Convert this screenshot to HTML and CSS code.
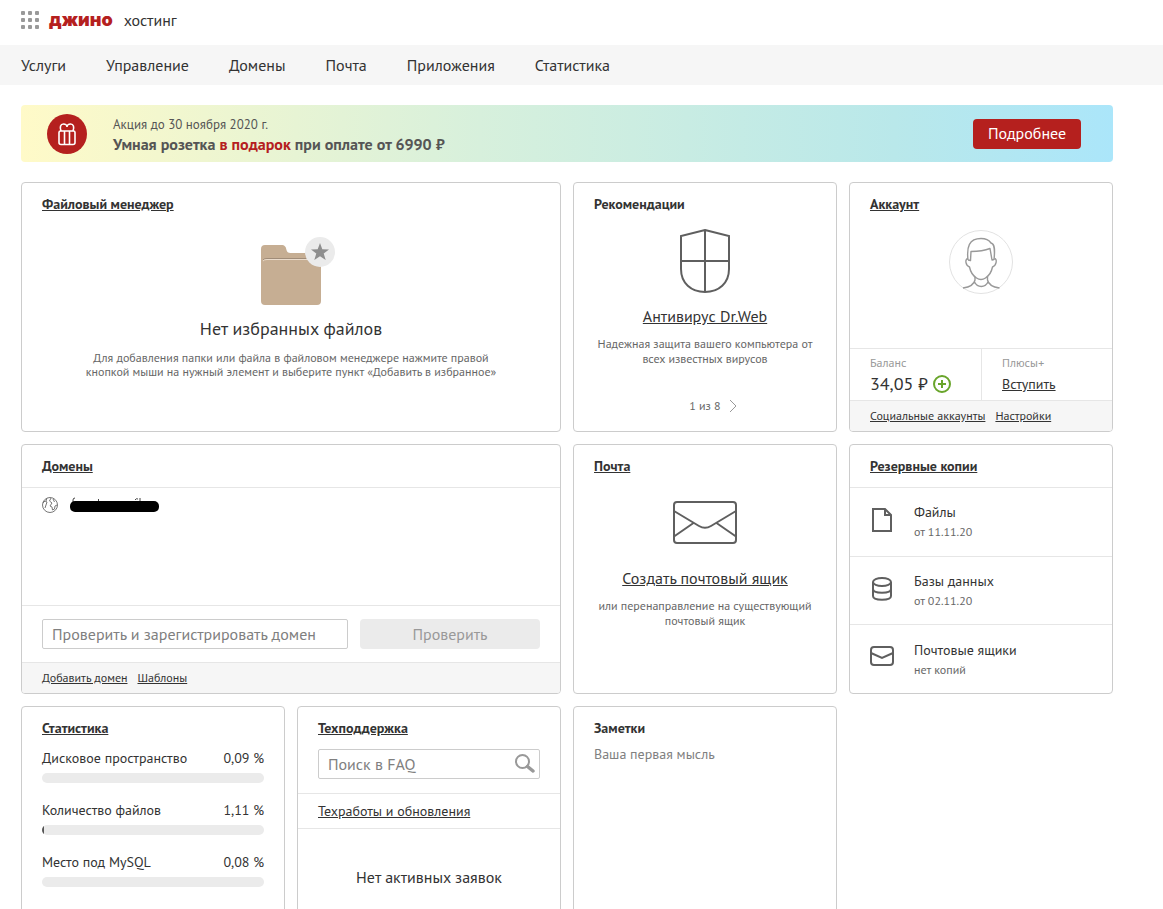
FILE: index.html
```html
<!DOCTYPE html>
<html lang="ru">
<head>
<meta charset="utf-8">
<title>Джино — хостинг</title>
<link rel="stylesheet" href="styles.css">
</head>
<body>
<header class="top">
  <svg class="apps" width="18" height="18" viewBox="0 0 18 18" fill="#999">
    <rect width="4" height="4" rx="1"/><rect x="7" width="4" height="4" rx="1"/><rect x="14" width="4" height="4" rx="1"/>
    <rect y="7" width="4" height="4" rx="1"/><rect x="7" y="7" width="4" height="4" rx="1"/><rect x="14" y="7" width="4" height="4" rx="1"/>
    <rect y="14" width="4" height="4" rx="1"/><rect x="7" y="14" width="4" height="4" rx="1"/><rect x="14" y="14" width="4" height="4" rx="1"/>
  </svg>
  <span class="logo">джино</span>
  <span class="service">хостинг</span>
</header>
<nav class="nav">
  <a href="#">Услуги</a><a href="#">Управление</a><a href="#">Домены</a><a href="#">Почта</a><a href="#">Приложения</a><a href="#">Статистика</a>
</nav>
<main class="main">
  <section class="promo">
    <svg width="40" height="40" viewBox="0 0 40 40" fill="none" stroke="#fff" stroke-width="1.6">
      <circle cx="20" cy="20" r="20" fill="#b5201e" stroke="none"/>
      <path d="M13.500 17h13q1.500 0 1.500 1.500v10q0 2-2 2H14q-2 0-2-2v-10q0-1.500 1.500-1.500zM17.500 17v13M22.500 17v13M14 17c-1.500-4-.5-7 2.500-7 2 0 3.500 1.500 3.500 3 0-1.500 1.500-3 3.500-3 3 0 4 3 2.500 7"/>
    </svg>
    <div class="promo-text">
      <div class="promo-date">Акция до 30 ноября 2020 г.</div>
      <div class="promo-title">Умная розетка <span class="red">в подарок</span> при оплате от 6990 ₽</div>
    </div>
    <button class="more" type="button">Подробнее</button>
  </section>

  <div class="grid">
    <section class="card wide">
      <h2 class="title"><a href="#">Файловый менеджер</a></h2>
      <div class="center folder-area">
        <svg class="folder" width="74" height="68" viewBox="0 0 74 68">
          <path d="M0 12q0-4 4-4h16c4 0 5 2 5.500 5q.5 3 4 3H56q4 0 4 4v44q0 4-4 4H4q-4 0-4-4z" fill="#c6ae93"/>
          <path d="M2 23q1-1.500 4-1.500h42" fill="none" stroke="#a08c78"/>
          <path d="M2 24q1-1.500 4-1.500h42" fill="none" stroke="#eadbcb"/>
          <circle cx="59" cy="15" r="15" fill="#ebebeb"/>
          <path d="M59 6l2.300 6.200 6.700.2-5.300 4.100 2 6.500-5.700-3.800-5.700 3.800 2-6.500-5.300-4.100 6.700-.2z" fill="#8e8e8e"/>
        </svg>
        <div class="big">Нет избранных файлов</div>
        <p class="note tight">Для добавления папки или файла в файловом менеджере нажмите правой<br>кнопкой мыши на нужный элемент и выберите пункт «Добавить в избранное»</p>
      </div>
    </section>

    <section class="card">
      <h2 class="title">Рекомендации</h2>
      <div class="center shield-area">
        <svg width="52" height="65" viewBox="0 0 52 65" fill="none" stroke="#5f5f5f" stroke-width="2">
          <path d="M26 1L50 7v33c0 14-10 23-24 23S2 54 2 40V7zM26 1v62M2 32h48"/>
        </svg>
        <a class="lead" href="#">Антивирус Dr.Web</a>
        <p class="note">Надежная защита вашего компьютера от<br>всех известных вирусов</p>
      </div>
      <div class="pager">1 из 8
        <svg width="8" height="14" viewBox="0 0 8 14" fill="none" stroke="#999"><path d="M1 1l6 6-6 6"/></svg>
      </div>
    </section>

    <section class="card">
      <h2 class="title"><a href="#">Аккаунт</a></h2>
      <div class="center avatar-area">
        <svg width="64" height="64" viewBox="0 0 64 64" fill="none" stroke="#999" stroke-width="1.4" stroke-linejoin="round">
          <circle cx="32" cy="32" r="31.500" stroke="#e2e2e2" stroke-width="1"/>
          <path d="M19 30C17.500 17 20 8.500 32 8.500c5 0 8 1.500 10 4.500 4 1 4 7 3 17"/>
          <path d="M19 30l2.500.5.500-9c8 0 14-1 19-3L43 30l2-.5"/>
          <path d="M19 28.500c-3.500.5-2.500 7 1.500 8.500 1 5 4 9 7 11 3 2 6 2 9 0s6-6 7-11c4-1.500 5-8 2-8.500"/>
          <path d="M26 47v3c-1 5-5 7-12 8M38.500 47v3c1 5 5 7 12 8M25.500 52c3 6 10.500 6 13.500 0"/>
        </svg>
      </div>
      <div class="balance">
        <div class="cell">
          <div class="label">Баланс</div>
          <div class="amount">34,05 ₽
            <button class="plus" type="button" aria-label="Пополнить"><svg width="18" height="18" viewBox="0 0 18 18" fill="none" stroke="#69a52b" stroke-width="2"><circle cx="9" cy="9" r="8"/><path d="M9 5v8M5 9h8"/></svg></button>
          </div>
        </div>
        <div class="cell">
          <div class="label">Плюсы<em>+</em></div>
          <a class="join" href="#">Вступить</a>
        </div>
      </div>
      <footer class="foot"><a href="#">Социальные аккаунты</a><a href="#">Настройки</a></footer>
    </section>

    <section class="card wide">
      <h2 class="title ruled"><a href="#">Домены</a></h2>
      <div class="domain">
        <svg width="16" height="16" viewBox="0 0 16 16" fill="none" stroke="#777"><circle cx="8" cy="8" r="7.500"/><path d="M1 6l2-2 2 1-1 3-1 3M5 1l-1 3M9 1L7.500 4 10 6 8 9l2 1 .5 3 2-1 .5-3 2-1M11 2l1.500 3"/></svg>
        <svg width="90" height="16" viewBox="0 0 90 16"><path d="M3 5V3q0-2 2-2M28.500 2v4M65 3q1-2 3-1M70 1v4" stroke="#444" fill="none"/><rect y="4" width="89" height="11" rx="5"/></svg>
      </div>
      <form class="check">
        <input class="field" type="text" aria-label="Домен" placeholder="Проверить и зарегистрировать домен">
        <button class="check-btn" type="button" disabled>Проверить</button>
      </form>
      <footer class="foot"><a href="#">Добавить домен</a><a href="#">Шаблоны</a></footer>
    </section>

    <section class="card">
      <h2 class="title"><a href="#">Почта</a></h2>
      <div class="center mail-area">
        <svg width="64" height="43" viewBox="0 0 64 43" fill="none" stroke="#5f5f5f" stroke-width="2">
          <rect x="1" y="1" width="62" height="41" rx="3"/>
          <path d="M1 10l25 15q6 3.500 12 0L63 10M1 35.500L20.500 22M63 35.500L43.500 22"/>
        </svg>
        <a class="lead" href="#">Создать почтовый ящик</a>
        <p class="note">или перенаправление на существующий<br>почтовый ящик</p>
      </div>
    </section>

    <section class="card">
      <h2 class="title ruled"><a href="#">Резервные копии</a></h2>
      <div class="copy">
        <svg width="24" height="24" viewBox="0 0 24 24" fill="none" stroke="#5f5f5f" stroke-width="2"><path d="M3 1h12l6 6v16H3zM15 1v6h6"/></svg>
        <div><div class="copy-name">Файлы</div><div class="copy-date">от 11.11.20</div></div>
      </div>
      <div class="copy">
        <svg width="24" height="24" viewBox="0 0 24 24" fill="none" stroke="#5f5f5f" stroke-width="2"><ellipse cx="12" cy="5" rx="9" ry="4"/><path d="M3 5v14c0 5 18 5 18 0V5M3 12c0 5 18 5 18 0"/></svg>
        <div><div class="copy-name">Базы данных</div><div class="copy-date">от 02.11.20</div></div>
      </div>
      <div class="copy">
        <svg width="24" height="24" viewBox="0 0 24 24" fill="none" stroke="#5f5f5f" stroke-width="2"><rect x="1" y="2" width="22" height="18" rx="3"/><path d="M1 8l11 5 11-5"/></svg>
        <div><div class="copy-name">Почтовые ящики</div><div class="copy-date">нет копий</div></div>
      </div>
    </section>

    <section class="card">
      <h2 class="title"><a href="#">Статистика</a></h2>
      <div class="stats">
        <div class="stat"><span>Дисковое пространство</span><span>0,09 %</span><div class="bar"></div></div>
        <div class="stat"><span>Количество файлов</span><span>1,11 %</span><div class="bar"><div class="fill" style="width:1.11%"></div></div></div>
        <div class="stat"><span>Место под MySQL</span><span>0,08 %</span><div class="bar"></div></div>
      </div>
    </section>

    <section class="card">
      <h2 class="title"><a href="#">Техподдержка</a></h2>
      <form class="search">
        <input class="field" type="text" aria-label="Поиск в FAQ" placeholder="Поиск в FAQ">
        <button class="search-btn" type="button" aria-label="Найти"><svg width="20" height="20" viewBox="0 0 20 20" fill="none" stroke="#999"><circle cx="7.500" cy="7.500" r="6.500" stroke-width="2"/><path d="M12.500 12.500l5.500 4.500" stroke-width="3.500" stroke-linecap="round"/></svg></button>
      </form>
      <div class="works"><a href="#">Техработы и обновления</a></div>
      <div class="empty">Нет активных заявок</div>
    </section>

    <section class="card">
      <h2 class="title notes-title">Заметки</h2>
      <textarea class="memo" aria-label="Заметки" placeholder="Ваша первая мысль"></textarea>
    </section>
  </div>
</main>
</body>
</html>
```
FILE: styles.css
```css
* { box-sizing: border-box; }
html, body { height: 100%; }
body {
  margin: 0;
  overflow-y: auto;
  scrollbar-width: none;
  background: #fff;
  color: #333;
  font: 14px/18px "PT Sans", "Noto Sans", sans-serif;
}
svg { display: block; flex: none; }
a { color: inherit; text-underline-offset: 1px; }
h2, p { margin: 0; }
button, input, textarea { font: inherit; }
button { border: 0; padding: 0; background: none; }

.top { display: flex; align-items: center; height: 45px; padding: 0 21px 6px; }
.logo { margin-left: 10px; color: #b5201e; font: 900 18px/24px Inter, sans-serif; }
.service { margin-left: 11px; font-size: 16px; }
.nav { display: flex; gap: 40px; height: 40px; padding: 0 21px; align-items: center; background: #f6f6f6; font-size: 16px; }
.nav a { text-decoration: none; }
.main { padding: 20px 50px 20px 21px; }

.promo {
  display: flex; align-items: center; height: 57px; margin-bottom: 20px; padding: 0 32px 0 26px;
  border-radius: 4px; background: linear-gradient(90deg, #fffac8, #d7f0dc 42%, #b9e8ea 80%, #abe6fa);
}
.promo-text { flex: 1; margin-left: 26px; color: #555; font-size: 13px; }
.promo-title { font-size: 16px; font-weight: 700; line-height: 18px; }
.promo-date { line-height: 20px; }
.red { color: #b5201e; }
.more { width: 108px; height: 30px; padding-bottom: 2px; border-radius: 4px; background: #b5201e; color: #fff; font-size: 16px; }

.grid { display: grid; grid-template-columns: repeat(4, 1fr); grid-auto-rows: minmax(250px, auto); gap: 12px; }
.card { display: flex; flex-direction: column; min-width: 0; overflow: hidden; border: 1px solid #ccc; border-radius: 4px; }
.wide { grid-column: span 2; }
.title { padding: 11px 20px; font-size: 14px; line-height: 20px; }
.ruled { border-bottom: 1px solid #e6e6e6; }
.center { display: flex; flex-direction: column; align-items: center; text-align: center; }
.note { color: #666; font-size: 12px; line-height: 15px; white-space: nowrap; }
.tight { line-height: 14px; }
.big { margin: 12px 0 10px; font-size: 18px; line-height: 24px; }
.lead { margin: 11px 0 9px; font-size: 16px; line-height: 22px; }

.folder-area { padding-top: 12px; }
.folder { margin-left: 14px; }
.shield-area { padding-top: 4px; }
.avatar-area { flex: 1; padding-top: 5px; }
.mail-area { padding-top: 14px; }
.mail-area .lead { margin-top: 23px; }
.pager { display: flex; justify-content: center; align-items: center; gap: 8px; margin-top: auto; padding: 0 0 16px 16px; color: #666; font-size: 12px; }

.balance { display: grid; grid-template-columns: 1fr 1fr; border-top: 1px solid #e6e6e6; }
.cell { height: 51px; padding: 5px 0 0 20px; }
.cell + .cell { border-left: 1px solid #e6e6e6; }
.label { color: #999; font-size: 12px; }
.amount { display: flex; align-items: center; gap: 5px; font-size: 18px; line-height: 24px; white-space: nowrap; }
.join { font-size: 14px; line-height: 24px; }
.foot { display: flex; gap: 10px; height: 31px; align-items: center; padding: 0 20px; border-top: 1px solid #e6e6e6; background: #f6f6f6; font-size: 12px; white-space: nowrap; }

.domain { display: flex; flex: 1; gap: 12px; padding: 9px 20px; }
.check { display: flex; gap: 12px; padding: 13px 20px; border-top: 1px solid #e6e6e6; }
.field { flex: 1; min-width: 0; height: 30px; padding: 0 9px; border: 1px solid #ccc; border-radius: 2px; font-size: 16px; }
.field::placeholder, .memo::placeholder { color: #808080; opacity: 1; }
.check-btn { width: 180px; height: 30px; border-radius: 4px; background: #ebebeb; color: #999; font-size: 16px; }

.copy { display: flex; flex: 1; align-items: center; gap: 20px; padding: 0 20px 4px; }
.copy + .copy { border-top: 1px solid #e6e6e6; }
.copy-name { padding-top: 5px; line-height: 20px; }
.copy-date { color: #666; font-size: 12px; line-height: 20px; }

.stats { display: flex; flex-direction: column; gap: 14px; padding: 0 20px; }
.stat { display: flex; flex-wrap: wrap; justify-content: space-between; row-gap: 6px; }
.bar { width: 100%; height: 10px; margin-bottom: 4px; overflow: hidden; border-radius: 5px; background: #ebebeb; }
.fill { height: 100%; background: #555; }

.search { position: relative; display: flex; padding: 0 20px 14px; }
.search-btn { position: absolute; top: 5px; right: 25px; }
.works { padding: 8px 20px; border-top: 1px solid #e6e6e6; border-bottom: 1px solid #e6e6e6; }
.empty { display: flex; flex: 1; align-items: center; justify-content: center; padding-bottom: 30px; font-size: 16px; }
.notes-title { padding-bottom: 7px; }
.memo { flex: 1; width: 100%; padding: 0 20px; border: 0; resize: none; outline: none; font-size: 14px; }
```
